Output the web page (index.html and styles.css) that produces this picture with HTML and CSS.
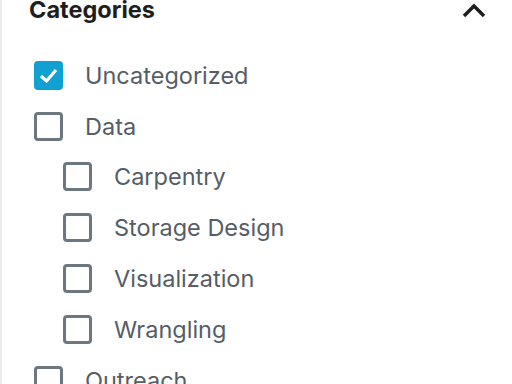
FILE: index.html
```html
<!DOCTYPE html>
<html lang="en">
<head>
  <meta charset="UTF-8" />
  <title>Categories</title>
  <link rel="stylesheet" href="styles.css">
</head>
<body>
  <div class="panel">
    <div class="panel-head">
      <h2>Categories</h2>
      <svg class="chevron" width="24" height="16" viewBox="0 0 24 16">
        <path d="M2 14 L12 4 L22 14" fill="none" stroke="#1e1e1e" stroke-width="3.5"/>
      </svg>
    </div>
    <ul class="cats">
      <li><label><span class="box checked"><svg width="23" height="23" viewBox="0 0 23 23"><path d="M4 12 L9.5 17 L19 6" fill="none" stroke="#fff" stroke-width="3.2"/></svg></span>Uncategorized</label></li>
      <li><label><span class="box"></span>Data</label>
        <ul class="cats child">
          <li><label><span class="box"></span>Carpentry</label></li>
          <li><label><span class="box"></span>Storage Design</label></li>
          <li><label><span class="box"></span>Visualization</label></li>
          <li><label><span class="box"></span>Wrangling</label></li>
        </ul>
      </li>
      <li><label><span class="box"></span>Outreach</label></li>
    </ul>
  </div>
</body>
</html>
```

FILE: styles.css
```css
body {
  margin: 0;
  background: #fff;
  font-family: Inter, "Noto Sans", sans-serif;
  overflow: hidden;
}

.panel {
  border-left: 2px solid #e8eaeb;
  height: 384px;
  padding-left: 32px;
  overflow: hidden;
}

.panel-head {
  display: flex;
  justify-content: space-between;
  align-items: center;
  margin-top: -6px;
  padding-right: 26px;
  height: 30px;
}

.panel-head h2 {
  margin: 0 0 0 -5px;
  font-size: 23.5px;
  font-weight: 700;
  color: #1e1e1e;
}

.chevron {
  margin-top: 1px;
}

.cats {
  list-style: none;
  margin: 26px 0 0;
  padding: 0;
}

.cats.child {
  margin: 0;
  padding-left: 29px;
}

.cats label {
  display: flex;
  align-items: center;
  height: 50.8px;
  font-size: 23.5px;
  color: #555d66;
}

.box {
  box-sizing: border-box;
  width: 29px;
  height: 29px;
  border: 3px solid #6c7781;
  border-radius: 4px;
  margin-right: 22px;
  display: flex;
  align-items: center;
  justify-content: center;
}

.box.checked {
  background: #11a0d2;
  border-color: #11a0d2;
}
```
